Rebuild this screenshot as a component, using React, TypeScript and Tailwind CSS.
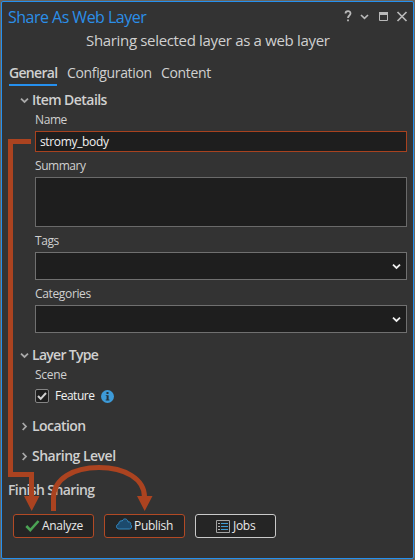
import React from "react";

function Chevron({ className, open = true, color = "#a9a9a9" }: { className?: string; open?: boolean; color?: string }) {
  return (
    <svg className={className} width="9" height="9" viewBox="0 0 9 9" fill="none" stroke={color} strokeWidth="1.8">
      <path d={open ? "M1 2.7 4.5 6 8 2.7" : "M2.7 1 6 4.5 2.7 8"} />
    </svg>
  );
}

function Section({ title, open, className, textClass }: { title: string; open: boolean; className: string; textClass: string }) {
  return (
    <div className={`flex h-5 items-center pl-[18px] ${className}`}>
      <Chevron open={open} className="mr-[3px] shrink-0" />
      <span className={`text-[14px] font-semibold leading-5 text-[#d0d0d0] ${textClass}`}>{title}</span>
    </div>
  );
}

function Label({ children, className }: { children: string; className: string }) {
  return <div className={`flex h-[25px] items-center pt-0.5 pl-[33px] text-[12px] text-[#d0d0d0] ${className}`}><span>{children}</span></div>;
}

function Combo() {
  return (
    <div className="ml-[33px] flex h-7 w-[372px] items-center justify-end border border-[#707070] bg-[#1e1e1e] pr-[5px]">
      <Chevron color="#f0f0f0" />
    </div>
  );
}

export default function App() {
  return (
    <div className="relative h-[560px] w-[415px] overflow-hidden bg-[#68655f] p-px font-['Open_Sans','Noto_Sans',sans-serif] whitespace-nowrap">
      <div className="h-full rounded-[2px] border border-[#2590ef] bg-[#333333]">
        <header className="flex h-7 items-center pt-0.5 pl-1.5">
          <h1 className="text-[16px] leading-6 tracking-[-0.52px] text-[#2b8fe8]">Share As Web Layer</h1>
          <svg className="ml-auto mr-0.5 -mt-[3px] shrink-0" width="68" height="16" viewBox="0 0 68 16" fill="none" stroke="#b9b9b9">
            <path strokeWidth="1.8" d="M2.5 5.5C2.5 2.3 7.5 2.2 7.5 5.5C7.5 7.5 5 7.5 5 10M5 11.5V13.3" />
            <path strokeWidth="1.7" d="m18 7 3.5 3.3L25 7" />
            <path d="M36.5 4.5h8v8h-8z" />
            <path strokeWidth="3" d="M36 5.5h9" />
            <path strokeWidth="1.7" d="m54.5 4 9 9m0-9-9 9" />
          </svg>
        </header>
        <div className="flex h-[21px] items-center pl-[84px] text-[15px] tracking-[-0.33px] text-[#d0d0d0]"><span>Sharing selected layer as a web layer</span></div>
        <nav className="mt-[11px] flex h-6 pl-[7px] text-[14px] leading-[22px] text-[#d0d0d0]">
          <span className="w-12 border-b-2 border-[#2590ef] font-semibold tracking-[-0.7px]">General</span>
          <span className="ml-2.5 w-[84px] tracking-[-0.35px]">Configuration</span>
          <span className="ml-2.5 tracking-[-0.35px]">Content</span>
        </nav>
        <Section title="Item Details" open className="mt-1" textClass="tracking-[-0.55px]" />
        <div className="h-[21px] pl-[33px] text-[12px] leading-[19px] tracking-[-0.4px] text-[#d0d0d0]">Name</div>
        <div className="ml-[33px] h-[21px] w-[372px] border border-[#a8421f] bg-[#1e1e1e] pl-1 text-[12px] leading-[19px] tracking-[-0.35px] text-[#f1f1f1]">stromy_body</div>
        <Label className="tracking-[-0.45px]">Summary</Label>
        <div className="ml-[33px] h-[50px] w-[372px] border border-[#6a6a6a] bg-[#1e1e1e]" />
        <Label className="tracking-[-0.4px]">Tags</Label>
        <Combo />
        <Label className="tracking-[-0.35px]">Categories</Label>
        <Combo />
        <Section title="Layer Type" open className="mt-3" textClass="tracking-[-0.7px]" />
        <div className="h-[19px] pl-[33px] text-[12px] leading-[19px] tracking-[-0.3px] text-[#d0d0d0]">Scene</div>
        <div className="flex h-6 items-center pl-[33px]">
          <span className="flex size-3.5 items-center justify-center rounded-[2px] border border-[#858585] bg-[#1e1e1e]">
            <svg width="12" height="12" viewBox="0 0 12 12" fill="none" stroke="#d0d0d0" strokeWidth="2"><path d="m2 6 2.7 2.8L10 3" /></svg>
          </span>
          <span className="ml-1.5 w-[46px] text-[12px] tracking-[-0.5px] text-[#f1f1f1]">Feature</span>
          <svg width="13" height="13" viewBox="0 0 13 13">
            <circle cx="6.5" cy="6.5" r="6.5" fill="#3d9bd9" />
            <path d="M5.5 2h2v2h-2zM4.8 5.2h2.8v4.4h.8v.8H4.7v-.8h.9V6h-.8z" fill="#24333d" />
          </svg>
        </div>
        <Section title="Location" open={false} className="mt-2" textClass="tracking-[-0.55px]" />
        <Section title="Sharing Level" open={false} className="mt-2.5" textClass="tracking-[-0.5px]" />
        <div className="mt-3.5 h-5 pl-1.5 text-[14px] font-semibold leading-5 tracking-[-0.6px] text-[#cbcbcb]">Finish Sharing</div>
        <footer className="mt-3.5 flex gap-2.5 pl-[11px] text-[12px] text-[#e8e8e8]">
          <button className="flex h-6 w-[81px] items-center rounded-[3px] border border-[#b24a25] bg-[#252525] pl-[11px]">
            <svg width="15" height="14" viewBox="0 0 15 14" fill="none" stroke="#4ba354" strokeWidth="2.6"><path d="m1.3 7 4 4.2L13.5 2" /></svg>
            <span className="ml-[2px] tracking-[-0.3px]">Analyze</span>
          </button>
          <button className="flex h-6 w-[81px] items-center rounded-[3px] border border-[#b24a25] bg-[#252525] pl-[11px]">
            <svg className="-mt-1" width="16" height="12" viewBox="0 0 16 12" fill="#1c4a6d" stroke="#3589c0"><path d="M3.3 11C-.3 11-.4 6.4 2.8 5.9C2.7 3.5 4.7 2.3 6.2 3C7.3-.1 11.7.4 12 3.9C14.4 3.5 15.3 5.3 14.7 6.7C16.2 7.6 15.7 11 13.5 11z" /></svg>
            <span className="ml-[2px] tracking-[-0.3px]">Publish</span>
          </button>
          <button className="flex h-6 w-[81px] items-center rounded-[3px] border border-[#c9c9c9] bg-[#252525] pl-5">
            <svg width="14" height="13" viewBox="0 0 14 13" fill="none"><path stroke="#a3a3a3" d="M.5.5h13v12H.5z" /><path stroke="#b5b5b5" d="M2 3.5h2M2 6.5h2M2 9.5h2" /><path stroke="#3f9bd2" d="M5 3.5h7M5 6.5h7M5 9.5h7" /></svg>
            <span className="ml-[3px] tracking-[-0.3px]">Jobs</span>
          </button>
        </footer>
      </div>
      <svg className="pointer-events-none absolute inset-0" width="415" height="560" viewBox="0 0 415 560" fill="none" stroke="#ab4320" strokeWidth="5">
        <path d="M31 141.5H10.5V474.5H31.5V497" />
        <path d="M53.5 511V498C53.5 479 73 467.5 99 467.5S144.5 479 144.5 497" />
        <path stroke="none" fill="#ab4320" d="M24 496h15.5L31.7 511zM137 496h15.5L144.7 511z" />
      </svg>
    </div>
  );
}
